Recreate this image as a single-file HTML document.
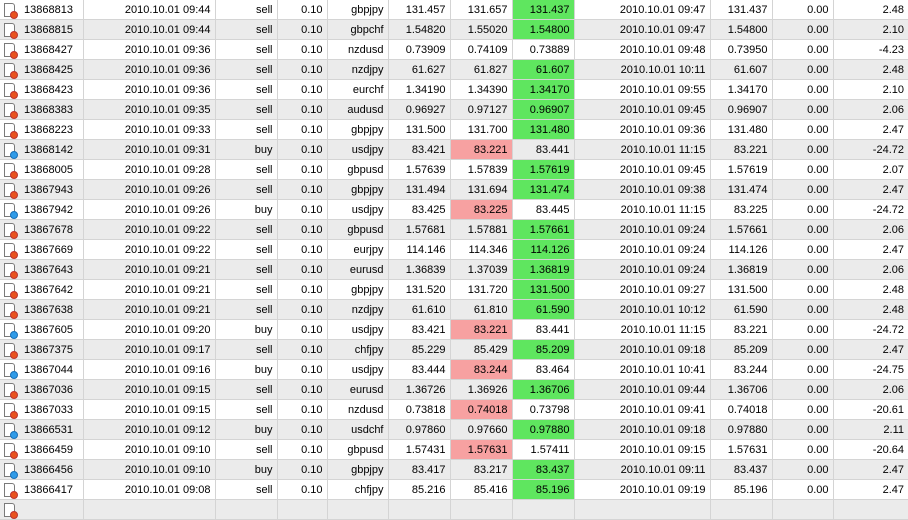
<!DOCTYPE html>
<html><head><style>
body{margin:0;width:908px;height:504px;overflow:hidden;background:#fff;font-family:"Liberation Sans",Tahoma,sans-serif;font-size:11px;color:#000}
table{border-collapse:collapse;table-layout:fixed;width:908px}
td{height:19px;padding:0 4px 0 0;border-right:1px solid #d4d4d4;border-bottom:1px solid #d4d4d4;text-align:right;white-space:nowrap;overflow:hidden}
tr:nth-child(even) td{background:#ebebeb}
td:first-child{text-align:left;padding-left:24px;position:relative}
td:last-child{border-right:none}
td.g{background:#5fe65f!important}
td.p{background:#f7a1a1!important}
.ic{position:absolute;left:4px;top:3px;width:9px;height:12px;border:1px solid #7a7a7a;border-radius:0 3px 0 0;background:#fff}
.ic::after{content:"";position:absolute;left:5px;top:7px;width:6px;height:6px;border-radius:50%;background:#e8521e;border:1px solid #b33}
.b::after{background:#2f9be8;border-color:#1a6fb5}
</style></head><body>
<table>
<colgroup><col style="width:83px"><col style="width:132px"><col style="width:62px"><col style="width:50px"><col style="width:61px"><col style="width:62px"><col style="width:62px"><col style="width:62px"><col style="width:136px"><col style="width:62px"><col style="width:61px"><col style="width:75px"></colgroup>
<tr><td><i class="ic"></i>13868813</td><td>2010.10.01 09:44</td><td>sell</td><td>0.10</td><td>gbpjpy</td><td>131.457</td><td>131.657</td><td class="g">131.437</td><td>2010.10.01 09:47</td><td>131.437</td><td>0.00</td><td>2.48</td></tr>
<tr><td><i class="ic"></i>13868815</td><td>2010.10.01 09:44</td><td>sell</td><td>0.10</td><td>gbpchf</td><td>1.54820</td><td>1.55020</td><td class="g">1.54800</td><td>2010.10.01 09:47</td><td>1.54800</td><td>0.00</td><td>2.10</td></tr>
<tr><td><i class="ic"></i>13868427</td><td>2010.10.01 09:36</td><td>sell</td><td>0.10</td><td>nzdusd</td><td>0.73909</td><td>0.74109</td><td>0.73889</td><td>2010.10.01 09:48</td><td>0.73950</td><td>0.00</td><td>-4.23</td></tr>
<tr><td><i class="ic"></i>13868425</td><td>2010.10.01 09:36</td><td>sell</td><td>0.10</td><td>nzdjpy</td><td>61.627</td><td>61.827</td><td class="g">61.607</td><td>2010.10.01 10:11</td><td>61.607</td><td>0.00</td><td>2.48</td></tr>
<tr><td><i class="ic"></i>13868423</td><td>2010.10.01 09:36</td><td>sell</td><td>0.10</td><td>eurchf</td><td>1.34190</td><td>1.34390</td><td class="g">1.34170</td><td>2010.10.01 09:55</td><td>1.34170</td><td>0.00</td><td>2.10</td></tr>
<tr><td><i class="ic"></i>13868383</td><td>2010.10.01 09:35</td><td>sell</td><td>0.10</td><td>audusd</td><td>0.96927</td><td>0.97127</td><td class="g">0.96907</td><td>2010.10.01 09:45</td><td>0.96907</td><td>0.00</td><td>2.06</td></tr>
<tr><td><i class="ic"></i>13868223</td><td>2010.10.01 09:33</td><td>sell</td><td>0.10</td><td>gbpjpy</td><td>131.500</td><td>131.700</td><td class="g">131.480</td><td>2010.10.01 09:36</td><td>131.480</td><td>0.00</td><td>2.47</td></tr>
<tr><td><i class="ic b"></i>13868142</td><td>2010.10.01 09:31</td><td>buy</td><td>0.10</td><td>usdjpy</td><td>83.421</td><td class="p">83.221</td><td>83.441</td><td>2010.10.01 11:15</td><td>83.221</td><td>0.00</td><td>-24.72</td></tr>
<tr><td><i class="ic"></i>13868005</td><td>2010.10.01 09:28</td><td>sell</td><td>0.10</td><td>gbpusd</td><td>1.57639</td><td>1.57839</td><td class="g">1.57619</td><td>2010.10.01 09:45</td><td>1.57619</td><td>0.00</td><td>2.07</td></tr>
<tr><td><i class="ic"></i>13867943</td><td>2010.10.01 09:26</td><td>sell</td><td>0.10</td><td>gbpjpy</td><td>131.494</td><td>131.694</td><td class="g">131.474</td><td>2010.10.01 09:38</td><td>131.474</td><td>0.00</td><td>2.47</td></tr>
<tr><td><i class="ic b"></i>13867942</td><td>2010.10.01 09:26</td><td>buy</td><td>0.10</td><td>usdjpy</td><td>83.425</td><td class="p">83.225</td><td>83.445</td><td>2010.10.01 11:15</td><td>83.225</td><td>0.00</td><td>-24.72</td></tr>
<tr><td><i class="ic"></i>13867678</td><td>2010.10.01 09:22</td><td>sell</td><td>0.10</td><td>gbpusd</td><td>1.57681</td><td>1.57881</td><td class="g">1.57661</td><td>2010.10.01 09:24</td><td>1.57661</td><td>0.00</td><td>2.06</td></tr>
<tr><td><i class="ic"></i>13867669</td><td>2010.10.01 09:22</td><td>sell</td><td>0.10</td><td>eurjpy</td><td>114.146</td><td>114.346</td><td class="g">114.126</td><td>2010.10.01 09:24</td><td>114.126</td><td>0.00</td><td>2.47</td></tr>
<tr><td><i class="ic"></i>13867643</td><td>2010.10.01 09:21</td><td>sell</td><td>0.10</td><td>eurusd</td><td>1.36839</td><td>1.37039</td><td class="g">1.36819</td><td>2010.10.01 09:24</td><td>1.36819</td><td>0.00</td><td>2.06</td></tr>
<tr><td><i class="ic"></i>13867642</td><td>2010.10.01 09:21</td><td>sell</td><td>0.10</td><td>gbpjpy</td><td>131.520</td><td>131.720</td><td class="g">131.500</td><td>2010.10.01 09:27</td><td>131.500</td><td>0.00</td><td>2.48</td></tr>
<tr><td><i class="ic"></i>13867638</td><td>2010.10.01 09:21</td><td>sell</td><td>0.10</td><td>nzdjpy</td><td>61.610</td><td>61.810</td><td class="g">61.590</td><td>2010.10.01 10:12</td><td>61.590</td><td>0.00</td><td>2.48</td></tr>
<tr><td><i class="ic b"></i>13867605</td><td>2010.10.01 09:20</td><td>buy</td><td>0.10</td><td>usdjpy</td><td>83.421</td><td class="p">83.221</td><td>83.441</td><td>2010.10.01 11:15</td><td>83.221</td><td>0.00</td><td>-24.72</td></tr>
<tr><td><i class="ic"></i>13867375</td><td>2010.10.01 09:17</td><td>sell</td><td>0.10</td><td>chfjpy</td><td>85.229</td><td>85.429</td><td class="g">85.209</td><td>2010.10.01 09:18</td><td>85.209</td><td>0.00</td><td>2.47</td></tr>
<tr><td><i class="ic b"></i>13867044</td><td>2010.10.01 09:16</td><td>buy</td><td>0.10</td><td>usdjpy</td><td>83.444</td><td class="p">83.244</td><td>83.464</td><td>2010.10.01 10:41</td><td>83.244</td><td>0.00</td><td>-24.75</td></tr>
<tr><td><i class="ic"></i>13867036</td><td>2010.10.01 09:15</td><td>sell</td><td>0.10</td><td>eurusd</td><td>1.36726</td><td>1.36926</td><td class="g">1.36706</td><td>2010.10.01 09:44</td><td>1.36706</td><td>0.00</td><td>2.06</td></tr>
<tr><td><i class="ic"></i>13867033</td><td>2010.10.01 09:15</td><td>sell</td><td>0.10</td><td>nzdusd</td><td>0.73818</td><td class="p">0.74018</td><td>0.73798</td><td>2010.10.01 09:41</td><td>0.74018</td><td>0.00</td><td>-20.61</td></tr>
<tr><td><i class="ic b"></i>13866531</td><td>2010.10.01 09:12</td><td>buy</td><td>0.10</td><td>usdchf</td><td>0.97860</td><td>0.97660</td><td class="g">0.97880</td><td>2010.10.01 09:18</td><td>0.97880</td><td>0.00</td><td>2.11</td></tr>
<tr><td><i class="ic"></i>13866459</td><td>2010.10.01 09:10</td><td>sell</td><td>0.10</td><td>gbpusd</td><td>1.57431</td><td class="p">1.57631</td><td>1.57411</td><td>2010.10.01 09:15</td><td>1.57631</td><td>0.00</td><td>-20.64</td></tr>
<tr><td><i class="ic b"></i>13866456</td><td>2010.10.01 09:10</td><td>buy</td><td>0.10</td><td>gbpjpy</td><td>83.417</td><td>83.217</td><td class="g">83.437</td><td>2010.10.01 09:11</td><td>83.437</td><td>0.00</td><td>2.47</td></tr>
<tr><td><i class="ic"></i>13866417</td><td>2010.10.01 09:08</td><td>sell</td><td>0.10</td><td>chfjpy</td><td>85.216</td><td>85.416</td><td class="g">85.196</td><td>2010.10.01 09:19</td><td>85.196</td><td>0.00</td><td>2.47</td></tr>
<tr><td><i class="ic"></i>&nbsp;</td><td></td><td></td><td></td><td></td><td></td><td></td><td></td><td></td><td></td><td></td><td></td></tr>
</table>
</body></html>
